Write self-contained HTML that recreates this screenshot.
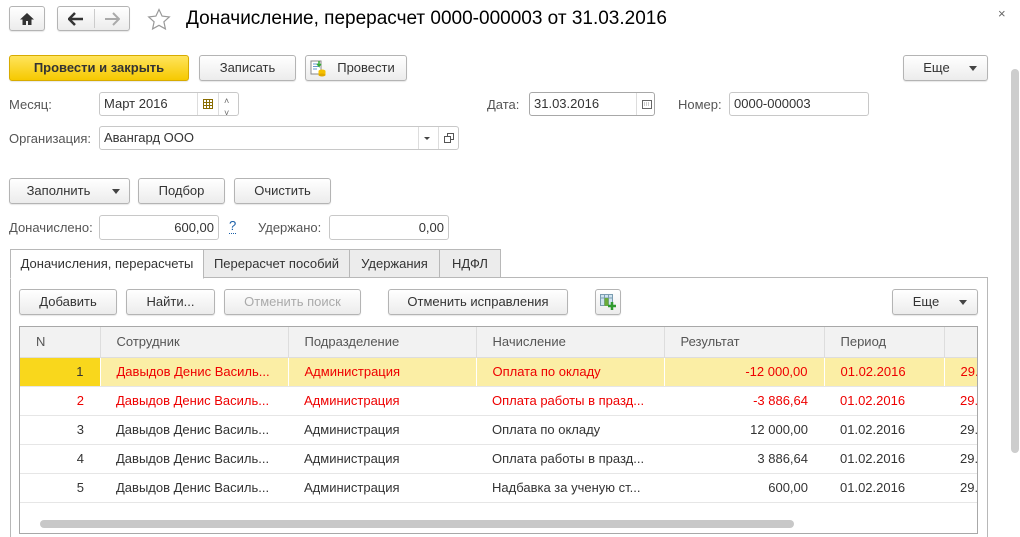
<!DOCTYPE html>
<html style="overflow:hidden;height:537px"><head><meta charset="utf-8"><style>
*{box-sizing:border-box;margin:0;padding:0}
body{width:1020px;height:537px;overflow:hidden;background:#fff;font-family:"Liberation Sans",Arial,sans-serif;font-size:13px;color:#333;position:relative}
.a{position:absolute}
.btn{position:absolute;border:1px solid #b4b4b4;border-radius:3px;background:linear-gradient(#fff,#ececec);text-align:center;color:#333;box-shadow:0 1px 1px rgba(0,0,0,.1)}
.fld{position:absolute;border:1px solid #c8c8c8;border-radius:3px;background:#fff;padding-left:4px;color:#333}
.lbl{position:absolute;color:#555}
.tri{display:inline-block;width:0;height:0;border-left:4px solid transparent;border-right:4px solid transparent;border-top:5px solid #444;vertical-align:middle}
table{border-collapse:collapse;table-layout:fixed;position:absolute;left:20px;top:327px}
td{height:29px;border-bottom:1px solid #e6e6e6;padding:0 16px;white-space:nowrap;overflow:hidden}
th{height:30px;background:#f2f2f2;font-weight:normal;text-align:left;padding:0 16px;color:#555;border-right:1px solid #ddd;border-bottom:1px solid #ddd}
.r{text-align:right}
.red td{color:#e00}
.sel td{background:#fbeea5;border-right:1px solid #fff}
.tab{position:absolute;top:249px;height:29px;border:1px solid #b8b8b8;background:#ececec;text-align:center;line-height:28px;color:#333}
</style></head><body>
<div class="btn" style="left:9px;top:6px;width:36px;height:25px"><svg width="16" height="16" viewBox="0 0 16 16" style="margin-top:4px"><path d="M8 2L1 8.5h2.5V14h3.5v-4h2v4h3.5V8.5H15z" fill="#333"/></svg></div>
<div class="btn" style="left:57px;top:6px;width:73px;height:25px"><div class="a" style="left:36px;top:2px;width:1px;height:19px;background:#ccc"></div><svg class="a" style="left:10px;top:5px" width="16" height="14" viewBox="0 0 16 14"><path d="M1 7h14M7 1L1 7l6 6" stroke="#333" stroke-width="2.5" fill="none"/></svg><svg class="a" style="left:46px;top:5px" width="16" height="14" viewBox="0 0 16 14"><path d="M1 7h14M9 1l6 6-6 6" stroke="#aaa" stroke-width="2" fill="none"/></svg></div>
<svg class="a" style="left:147px;top:8px" width="24" height="23" viewBox="0 0 24 23"><path d="M12 1.5l3.1 6.6 7.2.8-5.4 4.9 1.5 7.1L12 17.3l-6.4 3.6 1.5-7.1L1.7 8.9l7.2-.8z" fill="none" stroke="#999" stroke-width="1.2"/></svg>
<div class="a" style="left:186px;top:8px;font-size:19px;color:#000">Доначисление, перерасчет 0000-000003 от 31.03.2016</div>
<div class="a" style="left:998px;top:6px;font-size:13px;color:#666">×</div>

<div class="btn" style="left:9px;top:55px;width:180px;height:26px;line-height:24px;background:linear-gradient(#ffe45c,#f6c900);border-color:#d7ab00;font-weight:bold;color:#333">Провести и закрыть</div>
<div class="btn" style="left:199px;top:55px;width:97px;height:26px;line-height:24px">Записать</div>
<div class="btn" style="left:305px;top:55px;width:102px;height:26px;line-height:24px;padding-left:20px"><svg class="a" style="left:4px;top:4px" width="16" height="17" viewBox="0 0 16 17"><rect x="1" y="1" width="10" height="13" fill="#fff" stroke="#888"/><path d="M3 4h6M3 6.5h6M3 9h4" stroke="#69c"/><path d="M9 1v5l-2-2m2 2l2-2" stroke="#3a3" stroke-width="1.5" fill="none"/><ellipse cx="12" cy="11" rx="3.5" ry="1.5" fill="#f5c000"/><rect x="8.5" y="11" width="7" height="4" fill="#f5c000"/><ellipse cx="12" cy="15" rx="3.5" ry="1.5" fill="#e0a800"/></svg>Провести</div>
<div class="btn" style="left:903px;top:55px;width:85px;height:26px;line-height:24px;padding-right:18px">Еще<span class="tri a" style="right:10px;top:10px"></span></div>

<div class="lbl" style="left:9px;top:97px">Месяц:</div>
<div class="fld" style="left:99px;top:92px;width:140px;height:24px;line-height:22px">Март 2016<div class="a" style="left:97px;top:0;width:1px;height:22px;background:#ddd"></div><div class="a" style="left:118px;top:0;width:1px;height:22px;background:#ddd"></div><svg class="a" style="left:103px;top:6px" width="10" height="10"><rect x="0.5" y="0.5" width="9" height="9" fill="#fff" stroke="#8a6d00"/><path d="M0 3.5h10M0 6.5h10M3.5 0v10M6.5 0v10" stroke="#8a6d00"/></svg><div class="a" style="left:124px;top:-3px;font-size:9px;color:#666">˄</div><div class="a" style="left:124px;top:9px;font-size:9px;color:#666">˅</div></div>

<div class="lbl" style="left:487px;top:97px">Дата:</div>
<div class="fld" style="left:529px;top:92px;width:126px;height:24px;line-height:22px;border-color:#a8a8a8">31.03.2016<div class="a" style="left:106px;top:0;width:1px;height:22px;background:#ddd"></div><svg class="a" style="left:112px;top:7px" width="10" height="9"><rect x="0.5" y="0.5" width="9" height="8" fill="#fff" stroke="#666"/><path d="M2 3h6M2 5h6" stroke="#999" stroke-dasharray="1 1"/></svg></div>
<div class="lbl" style="left:678px;top:97px">Номер:</div>
<div class="fld" style="left:729px;top:92px;width:140px;height:24px;line-height:22px">0000-000003</div>

<div class="lbl" style="left:9px;top:131px">Организация:</div>
<div class="fld" style="left:99px;top:126px;width:360px;height:24px;line-height:22px">Авангард ООО<div class="a" style="left:318px;top:0;width:1px;height:22px;background:#ddd"></div><div class="a" style="left:338px;top:0;width:1px;height:22px;background:#ddd"></div><span class="tri a" style="left:324px;top:10px;border-width:3px 3px 0"></span><svg class="a" style="left:344px;top:6px" width="10" height="10"><rect x="3.5" y="0.5" width="6" height="6" fill="none" stroke="#555"/><rect x="0.5" y="3.5" width="6" height="6" fill="#fff" stroke="#555"/></svg></div>

<div class="btn" style="left:9px;top:178px;width:121px;height:26px;line-height:24px;padding-right:22px">Заполнить<span class="tri a" style="right:9px;top:10px"></span></div>
<div class="btn" style="left:138px;top:178px;width:87px;height:26px;line-height:24px">Подбор</div>
<div class="btn" style="left:234px;top:178px;width:97px;height:26px;line-height:24px">Очистить</div>

<div class="lbl" style="left:9px;top:220px">Доначислено:</div>
<div class="fld" style="left:99px;top:215px;width:120px;height:25px;line-height:23px;text-align:right;padding-right:4px">600,00</div>
<div class="a" style="left:229px;top:219px;color:#1a5fa8;border-bottom:1px dotted #1a5fa8;line-height:14px">?</div>
<div class="lbl" style="left:258px;top:220px">Удержано:</div>
<div class="fld" style="left:329px;top:215px;width:120px;height:25px;line-height:23px;text-align:right;padding-right:4px">0,00</div>

<div class="a" style="left:10px;top:277px;width:978px;height:270px;border:1px solid #b8b8b8;border-bottom:none"></div>
<div class="tab" style="left:10px;width:194px;background:#fff;border-bottom-color:#fff;height:30px">Доначисления, перерасчеты</div>
<div class="tab" style="left:203px;width:147px">Перерасчет пособий</div>
<div class="tab" style="left:349px;width:91px">Удержания</div>
<div class="tab" style="left:439px;width:62px">НДФЛ</div>

<div class="btn" style="left:19px;top:289px;width:98px;height:26px;line-height:24px">Добавить</div>
<div class="btn" style="left:126px;top:289px;width:89px;height:26px;line-height:24px">Найти...</div>
<div class="btn" style="left:224px;top:289px;width:137px;height:26px;line-height:24px;color:#aaa">Отменить поиск</div>
<div class="btn" style="left:388px;top:289px;width:180px;height:26px;line-height:24px">Отменить исправления</div>
<div class="btn" style="left:595px;top:289px;width:26px;height:26px"><svg class="a" style="left:4px;top:4px" width="17" height="16"><rect x="0.5" y="0.5" width="12" height="11" fill="#cfe3ef" stroke="#7a9cb0"/><path d="M0 4h13M4.5 0v12M8.5 0v12" stroke="#7a9cb0"/><rect x="4.5" y="4" width="4" height="8" fill="#6aab3a"/><path d="M12 8v8M8 12h8" stroke="#2e9a2e" stroke-width="2.5"/></svg></div>
<div class="btn" style="left:892px;top:289px;width:86px;height:26px;line-height:24px;padding-right:18px">Еще<span class="tri a" style="right:10px;top:10px"></span></div>

<div class="a" style="left:19px;top:326px;width:959px;height:208px;border:1px solid #a8a8a8;overflow:hidden">
<table style="left:0;top:0;width:980px">
<colgroup><col style="width:80px"><col style="width:188px"><col style="width:188px"><col style="width:188px"><col style="width:160px"><col style="width:120px"><col style="width:56px"></colgroup>
<tr><th>N</th><th>Сотрудник</th><th>Подразделение</th><th>Начисление</th><th>Результат</th><th>Период</th><th></th></tr>
<tr class="red sel"><td class="r" style="background:#f9d71c;color:#333">1</td><td>Давыдов Денис Василь...</td><td>Администрация</td><td>Оплата по окладу</td><td class="r">-12 000,00</td><td>01.02.2016</td><td>29...</td></tr>
<tr class="red"><td class="r">2</td><td>Давыдов Денис Василь...</td><td>Администрация</td><td>Оплата работы в празд...</td><td class="r">-3 886,64</td><td>01.02.2016</td><td>29...</td></tr>
<tr><td class="r">3</td><td>Давыдов Денис Василь...</td><td>Администрация</td><td>Оплата по окладу</td><td class="r">12 000,00</td><td>01.02.2016</td><td>29...</td></tr>
<tr><td class="r">4</td><td>Давыдов Денис Василь...</td><td>Администрация</td><td>Оплата работы в празд...</td><td class="r">3 886,64</td><td>01.02.2016</td><td>29...</td></tr>
<tr><td class="r">5</td><td>Давыдов Денис Василь...</td><td>Администрация</td><td>Надбавка за ученую ст...</td><td class="r">600,00</td><td>01.02.2016</td><td>29...</td></tr>
</table>
<div class="a" style="left:20px;top:193px;width:754px;height:8px;border-radius:4px;background:#c8c8c8"></div>
</div>
<div class="a" style="left:1011px;top:69px;width:8px;height:384px;border-radius:4px;background:#cdcdcd"></div>
</body></html>
